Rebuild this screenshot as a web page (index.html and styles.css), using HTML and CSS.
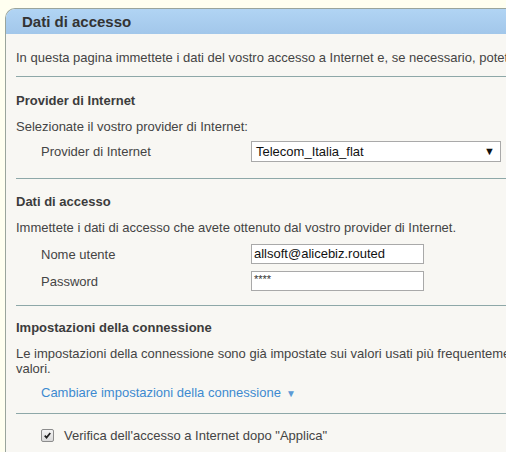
FILE: index.html
```html
<!DOCTYPE html>
<html lang="it">
<head>
<meta charset="utf-8">
<title>Dati di accesso</title>
<link rel="stylesheet" href="styles.css">
</head>
<body>
<div class="card">
  <div class="card-head">Dati di accesso</div>
  <div class="card-body">
    <p class="intro">In questa pagina immettete i dati del vostro accesso a Internet e, se necessario, potete modificare le impostazioni della connessione.</p>
    <hr class="sep">
    <section class="sec sec-provider">
      <h2 class="title">Provider di Internet</h2>
      <p class="desc">Selezionate il vostro provider di Internet:</p>
      <div class="row row-first">
        <span class="label">Provider di Internet</span>
        <span class="select"><span class="select-val">Telecom_Italia_flat</span><span class="select-arrow">▼</span></span>
      </div>
    </section>
    <hr class="sep sep-2">
    <section class="sec">
      <h2 class="title">Dati di accesso</h2>
      <p class="desc">Immettete i dati di accesso che avete ottenuto dal vostro provider di Internet.</p>
      <div class="row row-first row-input">
        <span class="label">Nome utente</span>
        <span class="input">allsoft@alicebiz.routed</span>
      </div>
      <div class="row row-input row-next">
        <span class="label">Password</span>
        <span class="input input-pw">****</span>
      </div>
    </section>
    <hr class="sep sep-3">
    <section class="sec">
      <h2 class="title">Impostazioni della connessione</h2>
      <p class="desc">Le impostazioni della connessione sono già impostate sui valori usati più frequentemente. Se necessario potete modificare questi<br>valori.</p>
      <div class="link-row"><span class="link">Cambiare impostazioni della connessione</span><span class="link-arrow">▼</span></div>
    </section>
    <hr class="sep sep-4">
    <div class="check-row">
      <span class="checkbox"><svg viewBox="0 0 13 13" width="13" height="13"><path d="M3.2 6.6 L5.4 9 L9.8 3.6" fill="none" stroke="#222" stroke-width="2"/></svg></span>
      <span class="check-label">Verifica dell'accesso a Internet dopo "Applica"</span>
    </div>
  </div>
</div>
</body>
</html>
```
FILE: styles.css
```css
html, body {
  margin: 0;
  padding: 0;
}
body {
  background: #fffff0;
  padding: 8px 0 0 5px;
  overflow: hidden;
  height: 452px;
  box-sizing: border-box;
  font-family: "Liberation Sans", Arial, sans-serif;
  font-size: 13px;
  line-height: 15px;
  color: #444;
}
.card {
  width: 900px;
  border: 1px solid #9aa59c;
  border-right: none;
  border-bottom: none;
  border-top-left-radius: 10px;
  background: #f8f7f3;
  overflow: hidden;
  min-height: 460px;
}
.card-head {
  height: 25px;
  background: linear-gradient(#b1d4f4, #a2c7ea);
  font-weight: bold;
  font-size: 15px;
  line-height: 26px;
  color: #333;
  padding-left: 16px;
}
.card-body {
  padding-left: 10px;
}
p, h2 {
  margin: 0;
}
.intro {
  margin-top: 16px;
  white-space: nowrap;
}
.sep {
  border: none;
  border-top: 1px solid #8ea8a8;
  margin: 11px 0 0 0;
  height: 0;
}
.title {
  font-size: 13px;
  font-weight: bold;
  color: #3c3c3c;
  margin-top: 16px;
}
.desc {
  margin-top: 11px;
  white-space: nowrap;
}
.row {
  display: flex;
  align-items: center;
  height: 21px;
  padding-left: 25px;
}
.row-first {
  margin-top: 7px;
}
.row-input {
  height: 20px;
}
.row-first.row-input {
  margin-top: 9px;
}
.row-next {
  margin-top: 7px;
}
.label {
  width: 210px;
}
.select {
  width: 250px;
  height: 21px;
  box-sizing: border-box;
  border: 1px solid #a9a9a9;
  background: #fff;
  display: flex;
  align-items: center;
  justify-content: space-between;
  padding: 0 5px 0 4px;
  color: #111;
  font-size: 13px;
}
.select-arrow {
  font-size: 11px;
  color: #111;
}
.input {
  width: 173px;
  height: 20px;
  box-sizing: border-box;
  border: 1px solid #a9a9a9;
  background: #fff;
  padding: 0 2px;
  color: #111;
  font-size: 13px;
  line-height: 18px;
}
.input-pw {
  font-size: 11px;
  line-height: 14px;
  color: #333;
}
.sep-2 {
  margin-top: 16px;
}
.sep-2 + .sec .title {
  margin-top: 15px;
}
.sep-3 {
  margin-top: 14px;
}
.sep-3 + .sec .title {
  margin-top: 14px;
}
.link-row {
  margin-top: 9px;
  padding-left: 25px;
  color: #3d8ad0;
}
.link-arrow {
  font-size: 10px;
  margin-left: 5px;
  color: #5d9ad6;
}
.sep-4 {
  margin-top: 12px;
}
.check-row {
  margin-top: 14px;
  padding-left: 25px;
  display: flex;
  align-items: center;
  gap: 10px;
}
.checkbox {
  width: 13px;
  height: 13px;
  box-sizing: border-box;
  border: 1px solid #8c8c8c;
  border-radius: 2px;
  background: linear-gradient(#f4f4f4, #d9d9d9);
  display: inline-flex;
  align-items: center;
  justify-content: center;
}
.checkbox svg {
  width: 11px;
  height: 11px;
}
```
